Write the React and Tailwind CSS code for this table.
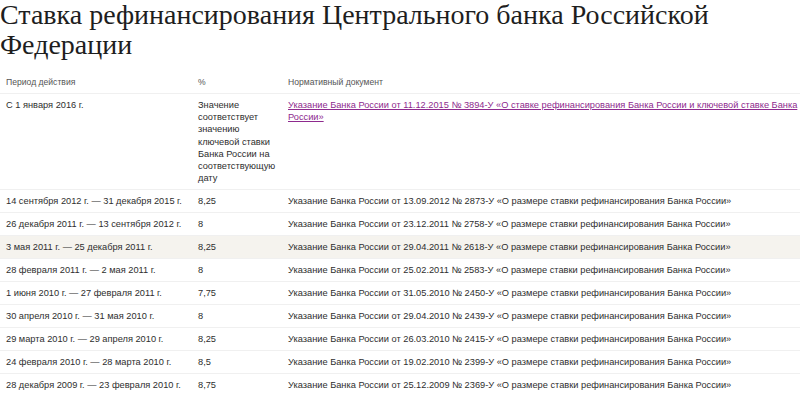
import React from 'react';

const rows = [
  ['14 сентября 2012 г. — 31 декабря 2015 г.', '8,25', '13.09.2012 № 2873-У'],
  ['26 декабря 2011 г. — 13 сентября 2012 г.', '8', '23.12.2011 № 2758-У'],
  ['3 мая 2011 г. — 25 декабря 2011 г.', '8,25', '29.04.2011 № 2618-У'],
  ['28 февраля 2011 г. — 2 мая 2011 г.', '8', '25.02.2011 № 2583-У'],
  ['1 июня 2010 г. — 27 февраля 2011 г.', '7,75', '31.05.2010 № 2450-У'],
  ['30 апреля 2010 г. — 31 мая 2010 г.', '8', '29.04.2010 № 2439-У'],
  ['29 марта 2010 г. — 29 апреля 2010 г.', '8,25', '26.03.2010 № 2415-У'],
  ['24 февраля 2010 г. — 28 марта 2010 г.', '8,5', '19.02.2010 № 2399-У'],
  ['28 декабря 2009 г. — 23 февраля 2010 г.', '8,75', '25.12.2009 № 2369-У'],
];

const grid = 'grid grid-cols-[198px_90px_1fr]';

export default function App() {
  return (
    <div className="h-[399px] w-[800px] overflow-hidden bg-white">
      <h1 className="font-['Liberation_Serif',serif] text-[28px] leading-[30px] text-[#1e1e1e]">
        Ставка рефинансирования Центрального банка Российской Федерации
      </h1>

      <div className="mt-[11px] font-['Liberation_Sans',Arial,sans-serif] text-[9.25px] leading-[12px] text-[#2e2e2e]">
        <div className={`${grid} py-[5px] text-[8.6px] text-[#555]`}>
          <span className="pl-[6px]">Период действия</span>
          <span>%</span>
          <span>Нормативный документ</span>
        </div>

        <div className={`${grid} border-t border-[#f0f0f0] pb-[5px] pt-[5px] leading-[12.2px]`}>
          <span className="pl-[6px]">С 1 января 2016 г.</span>
          <span className="pr-[8px]">
            Значение соответствует значению ключевой ставки Банка России на соответствующую дату
          </span>
          <a href="#" className="text-[#8e2a8e] underline">
            Указание Банка России от 11.12.2015 № 3894-У «О ставке рефинансирования Банка России и ключевой ставке Банка России»
          </a>
        </div>

        {rows.map(([period, rate, doc]) => (
          <div
            key={doc}
            className={`${grid} border-t border-[#f0f0f0] pb-[5px] pt-[5px] ${
              period.startsWith('3 мая') ? 'bg-[#f5f3ee]' : ''
            }`}
          >
            <span className="pl-[6px]">{period}</span>
            <span>{rate}</span>
            <span>Указание Банка России от {doc} «О размере ставки рефинансирования Банка России»</span>
          </div>
        ))}
      </div>
    </div>
  );
}
